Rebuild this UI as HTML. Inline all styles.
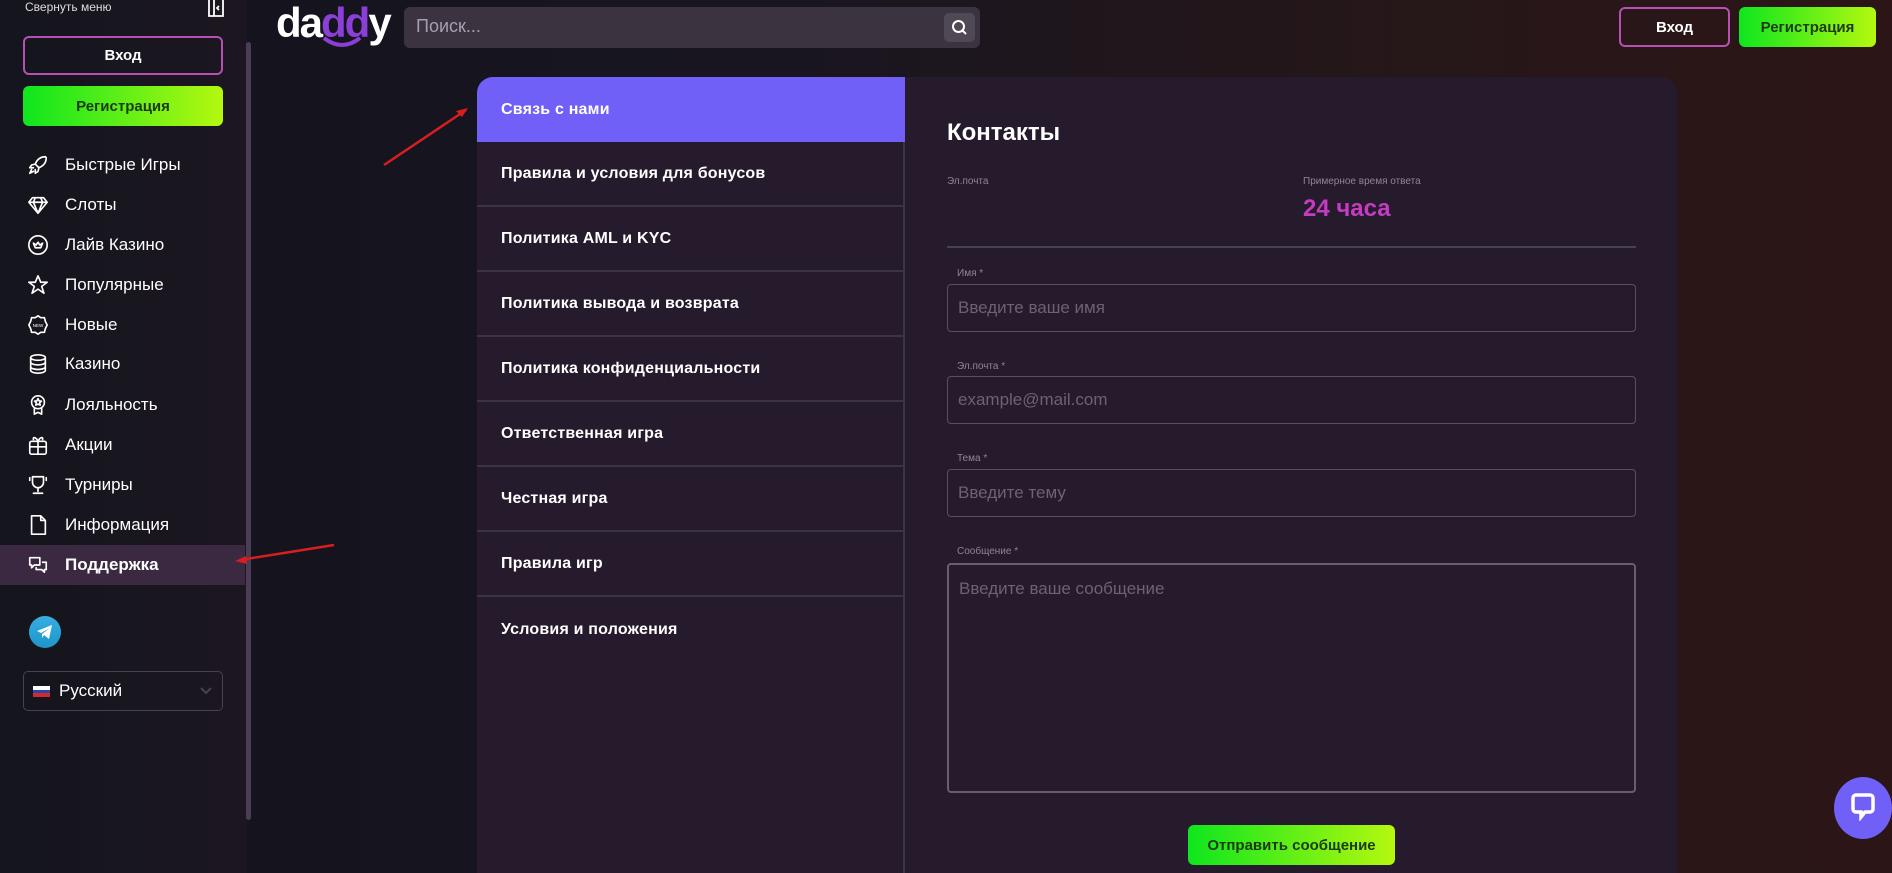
<!DOCTYPE html>
<html><head><meta charset="utf-8"><style>
*{box-sizing:border-box;margin:0;padding:0}
html,body{width:1892px;height:873px;overflow:hidden}
body{font-family:"Liberation Sans","DejaVu Sans",sans-serif;background:linear-gradient(90deg,#13141d 0%,#181520 40%,#261719 75%,#2c1516 100%);color:#fff;position:relative}
.abs{position:absolute}
.side{left:0;top:0;width:247px;height:873px;background:linear-gradient(90deg,#14151e,#1c1620)}
.btn-out{border:2px solid #b84fb5;border-radius:6px;display:flex;align-items:center;justify-content:center;font-weight:bold;font-size:15px;color:#fff}
.btn-green{background:linear-gradient(90deg,#0ee61e,#b4f80f);border-radius:6px;display:flex;align-items:center;justify-content:center;font-weight:bold;font-size:15px;color:#1c3a10}
.mi{left:0;width:245px;height:40px;display:flex;align-items:center;font-size:17px;color:#fff}
.mi svg{position:absolute;left:27px;width:22px;height:22px;fill:none;stroke:#fff;stroke-width:1.8;stroke-linecap:round;stroke-linejoin:round}
.mi span{position:absolute;left:65px}
.card{left:477px;top:77px;width:1200px;height:796px;background:#261b2c;border-radius:16px 16px 0 0;overflow:hidden}
.nav{position:absolute;left:0;top:0;width:428px;height:100%;border-right:2px solid #3d3346}
.ni{position:absolute;left:0;width:428px;height:65px;border-bottom:2px solid #3d3346;display:flex;align-items:center;padding-left:24px;font-weight:bold;font-size:16px;letter-spacing:.2px}
.lbl{font-size:10px;color:#8f8598}
.inp{left:947px;width:689px;height:48px;border:1.5px solid #5a4f62;border-radius:4px;font-size:17px;color:#6c6274;padding:13px 10px}
</style></head><body>
<div class="abs side"></div>
<div class="abs" style="left:246px;top:42px;width:5px;height:778px;background:#4a3d55;border-radius:3px"></div>
<div class="abs" style="left:25px;top:0;font-size:12px;color:#ddd">Свернуть меню</div>
<svg class="abs" style="left:207px;top:0" width="18" height="17" viewBox="0 0 18 17"><path d="M2 0V16H16V0M7 0V16M12 6L10 8L12 10" fill="none" stroke="#fff" stroke-width="1.8"/></svg>
<div class="abs btn-out" style="left:23px;top:36px;width:200px;height:39px">Вход</div>
<div class="abs btn-green" style="left:23px;top:86px;width:200px;height:40px">Регистрация</div>

<div class="abs mi" style="top:145px"><svg viewBox="0 0 24 24"><path d="M20 3c-5 0-9 3-11 8l4 4c5-2 8-6 8-11z M9 11l-4 1-2 3 4 0M13 15l-1 4-3 2 0-4M5 17l-2 4 4-2"/></svg><span>Быстрые Игры</span></div>
<div class="abs mi" style="top:185px"><svg viewBox="0 0 24 24"><path d="M6 4h12l4 5-10 12L2 9z M2 9h20M9 4l-2 5 5 12 5-12-2-5"/></svg><span>Слоты</span></div>
<div class="abs mi" style="top:225px"><svg viewBox="0 0 24 24"><circle cx="12" cy="12" r="10"/><path d="M7 10l2 5h6l2-5-3 2-2-3-2 3z"/></svg><span>Лайв Казино</span></div>
<div class="abs mi" style="top:265px"><svg viewBox="0 0 24 24"><path d="M12 2l3 7h7l-6 4.5 2.5 7.5-6.5-4.5-6.5 4.5 2.5-7.5L2 9h7z"/></svg><span>Популярные</span></div>
<div class="abs mi" style="top:305px"><svg viewBox="0 0 24 24"><path d="M12 2l3 2h4l1 4 2 4-2 4-1 4h-4l-3 2-3-2H5l-1-4-2-4 2-4 1-4h4z"/><text x="12" y="14" font-size="5" fill="#fff" stroke="none" text-anchor="middle" font-family="Liberation Sans">NEW</text></svg><span>Новые</span></div>
<div class="abs mi" style="top:344px"><svg viewBox="0 0 24 24"><ellipse cx="12" cy="5" rx="8" ry="3"/><path d="M4 5v14c0 1.7 3.6 3 8 3s8-1.3 8-3V5M4 10c0 1.7 3.6 3 8 3s8-1.3 8-3M4 15c0 1.7 3.6 3 8 3s8-1.3 8-3"/></svg><span>Казино</span></div>
<div class="abs mi" style="top:385px"><svg viewBox="0 0 24 24"><circle cx="12" cy="9" r="7"/><path d="M12 5l1.2 2.5 2.6.3-2 1.8.6 2.6L12 11l-2.4 1.2.6-2.6-2-1.8 2.6-.3zM8 15v7l4-2 4 2v-7"/></svg><span>Лояльность</span></div>
<div class="abs mi" style="top:425px"><svg viewBox="0 0 24 24"><rect x="3" y="8" width="18" height="14" rx="2"/><path d="M3 14h18M12 8v14M12 8c-2-5-6-5-5-2M12 8c2-5 6-5 5-2"/></svg><span>Акции</span></div>
<div class="abs mi" style="top:465px"><svg viewBox="0 0 24 24"><path d="M6 3h12v6a6 6 0 0 1-12 0zM12 15v4M7 21h10M3 4v3M21 4v3"/></svg><span>Турниры</span></div>
<div class="abs mi" style="top:505px"><svg viewBox="0 0 24 24"><path d="M5 2h10l5 5v15H5z M15 2v5h5"/></svg><span>Информация</span></div>
<div class="abs mi" style="top:545px;background:#3a2941;font-weight:bold"><svg viewBox="0 0 24 24"><path d="M3 4h11v8H8l-3 3v-3H3zM17 9h4v8h-2v3l-3-3h-6v-2"/></svg><span>Поддержка</span></div>

<div class="abs" style="left:29px;top:616px;width:32px;height:32px;border-radius:50%;background:linear-gradient(#37aee2,#1e96c8)"></div>
<svg class="abs" style="left:35px;top:623px" width="20" height="18" viewBox="0 0 20 18"><path d="M2 8L17 2 14 16 9 12 7 15 7 11 15 5 6 10z" fill="#fff"/></svg>
<div class="abs" style="left:23px;top:671px;width:200px;height:40px;border:1px solid #4a4050;border-radius:5px"></div>
<div class="abs" style="left:33px;top:686px;width:17px;height:4px;background:#fff"></div>
<div class="abs" style="left:33px;top:690px;width:17px;height:3px;background:#2a47b0"></div>
<div class="abs" style="left:33px;top:693px;width:17px;height:4px;background:#d52a2a"></div>
<div class="abs" style="left:59px;top:681px;font-size:17px">Русский</div>
<svg class="abs" style="left:200px;top:687px" width="12" height="8" viewBox="0 0 12 8"><path d="M1 1l5 5 5-5" stroke="#4a4050" stroke-width="2" fill="none"/></svg>

<div class="abs" style="left:276px;top:0;font-size:42px;font-weight:bold;letter-spacing:-2px;line-height:46px"><span style="color:#fff">da</span><span style="color:#8a3fd6">dd</span><span style="color:#fff">y</span></div>
<svg class="abs" style="left:322px;top:36px" width="40" height="12" viewBox="0 0 40 12"><path d="M2 2q18 14 36 0" stroke="#8a3fd6" stroke-width="4" fill="none"/></svg>
<div class="abs" style="left:404px;top:7px;width:576px;height:41px;background:#3c3340;border-radius:6px"></div>
<div class="abs" style="left:416px;top:16px;font-size:18px;color:#a89fae">Поиск...</div>
<div class="abs" style="left:944px;top:13px;width:31px;height:29px;background:#514856;border-radius:5px"></div>
<svg class="abs" style="left:951px;top:19px" width="17" height="17" viewBox="0 0 17 17"><circle cx="7.5" cy="7.5" r="5.5" stroke="#fff" stroke-width="2" fill="none"/><path d="M11.5 11.5L15 15" stroke="#fff" stroke-width="2"/></svg>
<div class="abs btn-out" style="left:1619px;top:7px;width:111px;height:40px">Вход</div>
<div class="abs btn-green" style="left:1739px;top:7px;width:137px;height:40px">Регистрация</div>

<div class="abs card">
<div class="nav">
<div class="ni" style="top:0;background:#7060f8;border-bottom:none">Связь с нами</div>
<div class="ni" style="top:65px">Правила и условия для бонусов</div>
<div class="ni" style="top:130px">Политика AML и KYC</div>
<div class="ni" style="top:195px">Политика вывода и возврата</div>
<div class="ni" style="top:260px">Политика конфиденциальности</div>
<div class="ni" style="top:325px">Ответственная игра</div>
<div class="ni" style="top:390px">Честная игра</div>
<div class="ni" style="top:455px">Правила игр</div>
<div class="ni" style="top:520px;border-bottom:none">Условия и положения</div>
</div>
</div>
<div class="abs" style="left:947px;top:119px;font-size:24px;font-weight:bold">Контакты</div>
<div class="abs lbl" style="left:947px;top:176px">Эл.почта</div>
<div class="abs lbl" style="left:1303px;top:176px">Примерное время ответа</div>
<div class="abs" style="left:1303px;top:195px;font-size:24px;font-weight:bold;color:#c53bc2">24 часа</div>
<div class="abs" style="left:947px;top:246px;width:689px;height:2px;background:#4a4150"></div>
<div class="abs lbl" style="left:957px;top:268px">Имя *</div>
<div class="abs inp" style="top:284px">Введите ваше имя</div>
<div class="abs lbl" style="left:957px;top:361px">Эл.почта *</div>
<div class="abs inp" style="top:376px">example@mail.com</div>
<div class="abs lbl" style="left:957px;top:453px">Тема *</div>
<div class="abs inp" style="top:469px">Введите тему</div>
<div class="abs lbl" style="left:957px;top:546px">Сообщение *</div>
<div class="abs inp" style="top:563px;height:230px;border:2px solid #6a5d72;padding-top:14px">Введите ваше сообщение</div>
<div class="abs btn-green" style="left:1188px;top:825px;width:207px;height:40px;font-size:15px">Отправить сообщение</div>

<div class="abs" style="left:1834px;top:777px;width:58px;height:62px;border-radius:50%;background:#7060f8"></div>
<svg class="abs" style="left:1851px;top:793px" width="24" height="28" viewBox="0 0 24 28"><path d="M5 2h14a3 3 0 0 1 3 3v11a3 3 0 0 1-3 3h-5l-4 5v-5H5a3 3 0 0 1-3-3V5a3 3 0 0 1 3-3z" fill="none" stroke="#fff" stroke-width="3.5"/></svg>

<svg class="abs" style="left:0;top:0" width="1892" height="873"><path d="M384 165L466 110" stroke="#d81e1e" stroke-width="2.5"/><path d="M468 108l-12 3 6 6z" fill="#d81e1e"/><path d="M334 545L240 560" stroke="#d81e1e" stroke-width="2.5"/><path d="M235 561l11-5 1 8z" fill="#d81e1e"/></svg>
</body></html>
